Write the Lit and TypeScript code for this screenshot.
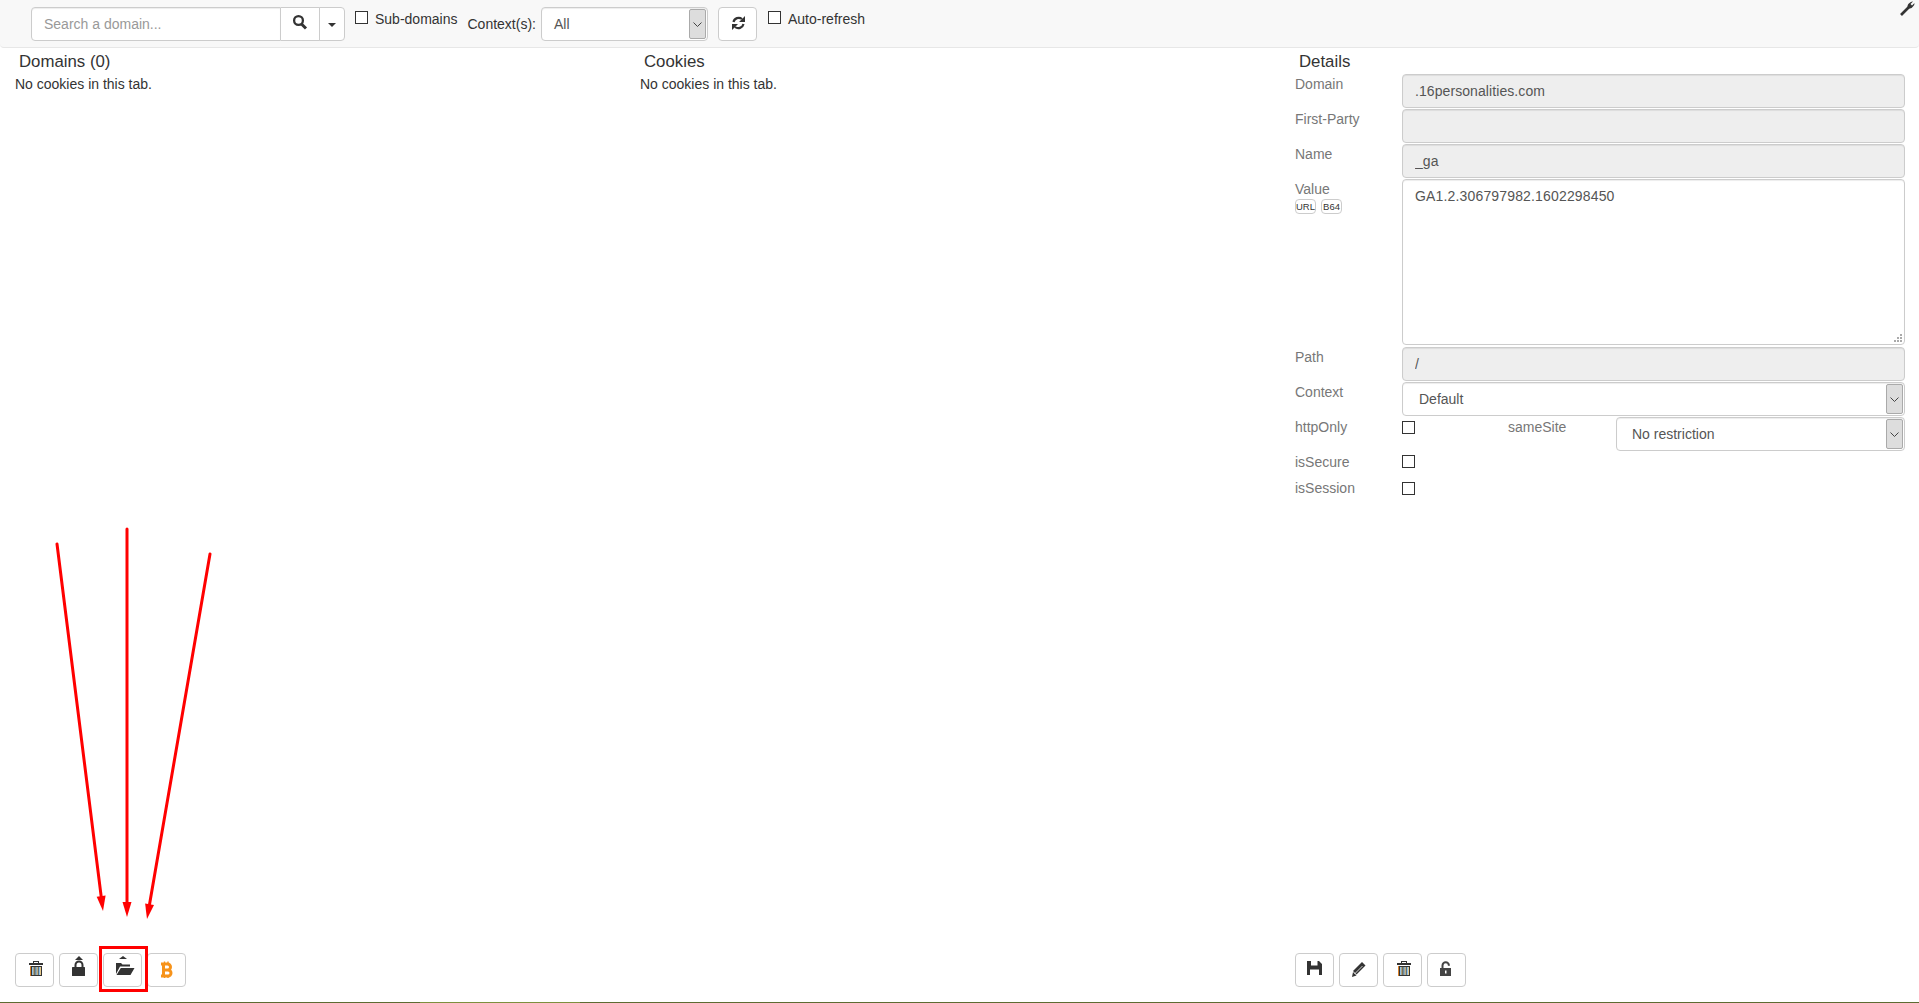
import { LitElement, html, css, svg } from "lit";
import { customElement } from "lit/decorators.js";

const DARK = "#333";

const trash = () => svg`
  <g>
    <rect x="18.5" y="8.5" width="5" height="2" fill="none" stroke="${DARK}"/>
    <rect x="14" y="10" width="14" height="2" fill="${DARK}"/>
    <rect x="15" y="13" width="12" height="10" fill="${DARK}"/>
    <rect x="15" y="13" width="1" height="10" fill="#d9812a"/>
    <rect x="17" y="14" width="1.4" height="8" fill="#8fc3e8"/>
    <rect x="18.4" y="14" width="1" height="8" fill="#e6c98a"/>
    <rect x="20.4" y="14" width="1.4" height="8" fill="#8fc3e8"/>
    <rect x="21.8" y="14" width="1" height="8" fill="#e6c98a"/>
    <rect x="23.6" y="14" width="1.4" height="8" fill="#8fc3e8"/>
    <rect x="25" y="14" width="1" height="8" fill="#e6c98a"/>
  </g>`;

const icons: Record<string, unknown> = {
  trash: trash(),
  lockUp: svg`
    <path d="M16 7 L20 3 L24 7 Z" fill="${DARK}"/>
    <path d="M16.5 14 V12 a3.5 3.5 0 0 1 7 0 V14" fill="none" stroke="${DARK}" stroke-width="2"/>
    <rect x="13" y="14" width="13" height="9" rx="0.5" fill="${DARK}"/>`,
  folderUp: svg`
    <path d="M16 6 L20 3 L24 6 Z" fill="${DARK}"/>
    <path d="M13 21 V10 h5 l1.5 1.5 H27 V13.5 H17 Z" fill="${DARK}"/>
    <path d="M17.8 15 H31.5 L27.5 22 H13.5 Z" fill="${DARK}"/>`,
  bitcoin: svg`
    <g fill="none" stroke="#f7931a">
      <path d="M14 11 H20.5 a3 3 0 0 1 0 6 H16 M16 17 H21 a3 3 0 0 1 0 6 H14" stroke-width="3"/>
      <path d="M16.5 10 V24" stroke-width="3"/>
      <path d="M17.5 8.5 V10 M21 8.5 V10 M17.5 24 V25 M21 24 V25" stroke-width="1.4"/>
    </g>`,
  save: svg`
    <path fill-rule="evenodd" fill="${DARK}" d="M12 8 H24 L27 11 V22 H12 Z M16 8 V12.5 H22.5 V8 Z M15 16.5 V22 H24 V16.5 Z"/>`,
  pencil: svg`
    <path fill="${DARK}" d="M23.5 9.5 L27 13 L18 22 L14.5 18.5 Z" transform="translate(-0.5 -0.5)"/>
    <path fill="${DARK}" d="M14 19 L17.5 22.5 L13 24 Z"/>
    <path stroke="#fff" stroke-width="0.8" d="M15.5 21 L23.5 13"/>`,
  trash2: trash(),
  unlock: svg`
    <path d="M15.5 15 V12.5 a3.2 3.2 0 0 1 6.4 0 V12.8" fill="none" stroke="#444" stroke-width="2"/>
    <path fill-rule="evenodd" fill="#444" d="M13 15 H24 V23 H13 Z M18 17.5 V20.5 H19.5 V17.5 Z"/>`,
  search: svg`
    <circle cx="18.5" cy="13.5" r="4.4" fill="none" stroke="${DARK}" stroke-width="2.3"/>
    <path d="M21.5 17 L26 21.5" stroke="${DARK}" stroke-width="3"/>`,
  refresh: svg`
    <g fill="none" stroke="${DARK}" stroke-width="2.2">
      <path d="M15.5 15 a5.3 5.3 0 0 1 8.5 -3"/>
      <path d="M25.5 17 a5.3 5.3 0 0 1 -8.5 3"/>
    </g>
    <path d="M27 9 V15 H21 Z M14 23 V17 H20 Z" fill="${DARK}"/>`,
};

@customElement("app-root")
export class AppRoot extends LitElement {
  static styles = css`
    :host {
      display: block;
      position: relative;
      height: 1003px;
      overflow: hidden;
      background: #fff;
      color: #333;
      font: 14px/20px "Liberation Sans", Arial, sans-serif;
    }
    * { box-sizing: border-box; }
    .page { display: flex; flex-direction: column; height: 1003px; }

    .nav {
      flex: none;
      height: 48px;
      display: flex;
      align-items: flex-start;
      padding: 7px 4px 0 31px;
      background: #f8f8f8;
      border-bottom: 1px solid #e7e7e7;
      border-radius: 0 0 4px 4px;
    }
    .group { display: flex; width: 315px; height: 34px; }
    .search {
      width: 250px;
      height: 34px;
      padding: 6px 12px;
      border: 1px solid #ccc;
      border-radius: 4px 0 0 4px;
      box-shadow: inset 0 1px 1px rgba(0, 0, 0, .075);
      font: inherit;
      color: #555;
      outline: none;
    }
    .search::placeholder { color: #999; opacity: 1; }
    .btn {
      display: block;
      width: 39px;
      height: 34px;
      padding: 0;
      background: #fff;
      border: 1px solid #ccc;
      border-radius: 4px;
      flex: none;
    }
    .btn svg { display: block; width: 39px; height: 34px; margin: -1px; }
    .group .mid { border-left: 0; border-radius: 0; }
    .group .end {
      width: 26px;
      border-left: 1px solid #ccc;
      margin-left: -1px;
      border-radius: 0 4px 4px 0;
      display: flex;
      align-items: center;
      justify-content: center;
    }
    .caret {
      display: block;
      margin-top: 2px;
      border-top: 4px solid #333;
      border-left: 4px solid transparent;
      border-right: 4px solid transparent;
    }
    .check {
      display: flex;
      align-items: center;
      height: 13px;
      margin-top: 4px;
      white-space: nowrap;
    }
    .check span { margin-top: 2px; }
    .check.a { margin-left: 9px; }
    .check.b { margin-left: 11px; }
    .box {
      appearance: none;
      display: block;
      flex: none;
      width: 13px;
      height: 13px;
      margin: 0;
      background: #fff;
      border: 1px solid #333;
      border-radius: 0;
    }
    .check .box { margin-right: 7px; }
    .ctx-label { margin: 7px 5px 0 10px; white-space: nowrap; }
    .select {
      display: flex;
      justify-content: space-between;
      align-items: center;
      height: 34px;
      padding: 1px 1px 1px 12px;
      background: #fff;
      border: 1px solid #ccc;
      border-radius: 4px;
      color: #555;
      box-shadow: inset 0 1px 1px rgba(0, 0, 0, .075);
    }
    .select.all { width: 167px; }
    .select.wide { padding-left: 16px; }
    .same .select.wide { padding-left: 15px; }
    .arrow {
      display: flex;
      align-items: center;
      justify-content: center;
      width: 17px;
      height: 100%;
      background: #ddd;
      border: 1px solid #aaa;
      border-radius: 2px;
    }
    .arrow svg { display: block; width: 9px; height: 5px; }
    .refresh { margin-left: 10px; }
    .wrench { display: block; width: 16px; height: 16px; margin: -7px 0 0 auto; }

    .main {
      flex: 1;
      min-height: 0;
      display: grid;
      grid-template-columns: 625px 655px 1fr;
    }
    .col {
      display: flex;
      flex-direction: column;
      padding: 0 15px 15px;
      min-width: 0;
    }
    .col.details { padding-right: 14px; }
    .head {
      height: 27px;
      margin-bottom: -1px;
      padding: 1px 0 0 4px;
      font-size: 16.8px;
      line-height: 26px;
    }
    .actions { display: flex; gap: 5px; margin-top: auto; }

    .form { display: flex; flex-direction: column; }
    .row { display: flex; min-height: 34px; margin-bottom: 1px; }
    .row.path { margin-top: 2px; }
    .row.tall, .row.opts { margin-bottom: 0; }
    .lbl { flex: none; width: 107px; color: #777; line-height: 20px; }
    .ctl { flex: 1; min-width: 0; }
    .ctl input, .ctl textarea {
      display: block;
      width: 100%;
      font: inherit;
      color: #555;
      border: 1px solid #ccc;
      border-radius: 4px;
      padding: 6px 12px;
      box-shadow: inset 0 1px 1px rgba(0, 0, 0, .075);
      outline: none;
    }
    .ctl input { height: 34px; background: #eee; letter-spacing: .08px; }
    .ctl textarea { height: 166px; background: #fff; resize: vertical; letter-spacing: .16px; }
    .ctl textarea::-webkit-resizer {
      background:
        linear-gradient(#aaa, #aaa) 11px 5px / 2px 2px no-repeat,
        linear-gradient(#aaa, #aaa) 8px 8px / 2px 2px no-repeat,
        linear-gradient(#aaa, #aaa) 11px 8px / 2px 2px no-repeat,
        linear-gradient(#aaa, #aaa) 5px 11px / 2px 2px no-repeat,
        linear-gradient(#aaa, #aaa) 8px 11px / 2px 2px no-repeat,
        linear-gradient(#aaa, #aaa) 11px 11px / 2px 2px no-repeat;
    }
    .badges { display: flex; gap: 5px; }
    .badge {
      width: 21px;
      height: 15px;
      border: 1px solid #ccc;
      border-radius: 4px;
      background: #fff;
      color: #333;
      font-size: 9.5px;
      line-height: 13px;
      text-align: center;
    }
    .same { display: flex; flex: 1; align-items: flex-start; }
    .same .box { margin-top: 4px; }
    .same-lbl { margin-left: 93px; width: 108px; color: #777; }
    .same .select { flex: 1; }
    .flag { display: flex; height: 26px; }
    .flag .lbl { margin-top: 1px; }
    .flag .box { margin-top: 4px; }
    .flag.last .box { margin-top: 5px; }

    .rule {
      flex: none;
      height: 1px;
      background: linear-gradient(to right, #5d6b32 420px, #7d8f3e 420px, #7d8f3e 580px, #5d6b32 580px);
    }
    .marks {
      position: absolute;
      inset: 0;
      width: 1919px;
      height: 1003px;
      pointer-events: none;
    }
  `;

  private icon(name: string) {
    return html`<svg viewBox="0 0 39 34" aria-hidden="true">${icons[name]}</svg>`;
  }

  private chevron() {
    return html`<span class="arrow"><svg viewBox="0 0 9 5"><path d="M0.5 0.5 L4.5 4.5 L8.5 0.5" fill="none" stroke="#444"/></svg></span>`;
  }

  private field(label: string, value: string, cls = "") {
    return html`<div class="row ${cls}">
      <div class="lbl">${label}</div>
      <div class="ctl"><input readonly .value=${value} /></div>
    </div>`;
  }

  private button(name: string, title: string) {
    return html`<button class="btn" title=${title}>${this.icon(name)}</button>`;
  }

  private arrowLine(x1: number, y1: number, x2: number, y2: number) {
    const a = Math.atan2(y2 - y1, x2 - x1);
    const len = 15;
    const half = 4.5;
    const bx = x2 - Math.cos(a) * len;
    const by = y2 - Math.sin(a) * len;
    const nx = -Math.sin(a) * half;
    const ny = Math.cos(a) * half;
    return svg`
      <line x1=${x1} y1=${y1} x2=${bx} y2=${by} stroke="#f00" stroke-width="3" stroke-linecap="round"/>
      <polygon points="${x2},${y2} ${bx + nx},${by + ny} ${bx - nx},${by - ny}" fill="#f00"/>`;
  }

  render() {
    return html`
      <div class="page">
        <header class="nav">
          <div class="group">
            <input class="search" placeholder="Search a domain..." />
            <button class="btn mid">${this.icon("search")}</button>
            <button class="btn end"><span class="caret"></span></button>
          </div>
          <label class="check a"><input class="box" type="checkbox" /><span>Sub-domains</span></label>
          <span class="ctx-label">Context(s):</span>
          <div class="select all"><span>All</span>${this.chevron()}</div>
          <button class="btn refresh">${this.icon("refresh")}</button>
          <label class="check b"><input class="box" type="checkbox" /><span>Auto-refresh</span></label>
          <svg class="wrench" viewBox="0 0 16 16" aria-hidden="true">
            <path d="M2 15 L10 7" stroke="#333" stroke-width="2.6" fill="none"/>
            <path d="M9 8 a4 4 0 0 1 1.5 -5 a4 4 0 0 1 3.5 -1.5 L11.5 4 L13 5.5 L15.5 3 a4 4 0 0 1 -1.5 3.5 a4 4 0 0 1 -5 1.5 Z" fill="#333"/>
          </svg>
        </header>

        <main class="main">
          <section class="col">
            <div class="head">Domains (0)</div>
            <div>No cookies in this tab.</div>
            <div class="actions">
              ${this.button("trash", "Delete")}
              ${this.button("lockUp", "Import protected")}
              ${this.button("folderUp", "Import")}
              ${this.button("bitcoin", "Donate")}
            </div>
          </section>

          <section class="col">
            <div class="head">Cookies</div>
            <div>No cookies in this tab.</div>
          </section>

          <section class="col details">
            <div class="head">Details</div>
            <div class="form">
              ${this.field("Domain", ".16personalities.com")}
              ${this.field("First-Party", "")}
              ${this.field("Name", "_ga")}
              <div class="row tall">
                <div class="lbl">
                  Value
                  <div class="badges"><span class="badge">URL</span><span class="badge">B64</span></div>
                </div>
                <div class="ctl"><textarea readonly .value=${"GA1.2.306797982.1602298450"}></textarea></div>
              </div>
              ${this.field("Path", "/", "path")}
              <div class="row ctx">
                <div class="lbl">Context</div>
                <div class="ctl"><div class="select wide"><span>Default</span>${this.chevron()}</div></div>
              </div>
              <div class="row opts">
                <div class="lbl">httpOnly</div>
                <div class="same">
                  <input class="box" type="checkbox" />
                  <span class="same-lbl">sameSite</span>
                  <div class="select wide"><span>No restriction</span>${this.chevron()}</div>
                </div>
              </div>
              <div class="flag"><div class="lbl">isSecure</div><input class="box" type="checkbox" /></div>
              <div class="flag last"><div class="lbl">isSession</div><input class="box" type="checkbox" /></div>
            </div>
            <div class="actions">
              ${this.button("save", "Save")}
              ${this.button("pencil", "Edit")}
              ${this.button("trash2", "Delete")}
              ${this.button("unlock", "Unprotect")}
            </div>
          </section>
        </main>
        <div class="rule"></div>
      </div>

      <svg class="marks" viewBox="0 0 1919 1003" aria-hidden="true">
        ${this.arrowLine(57, 544, 103, 911)}
        ${this.arrowLine(127, 529, 127, 917)}
        ${this.arrowLine(210, 554, 147, 919)}
        <rect x="100.5" y="947.5" width="46" height="43" fill="none" stroke="#f00" stroke-width="3"/>
      </svg>
    `;
  }
}
